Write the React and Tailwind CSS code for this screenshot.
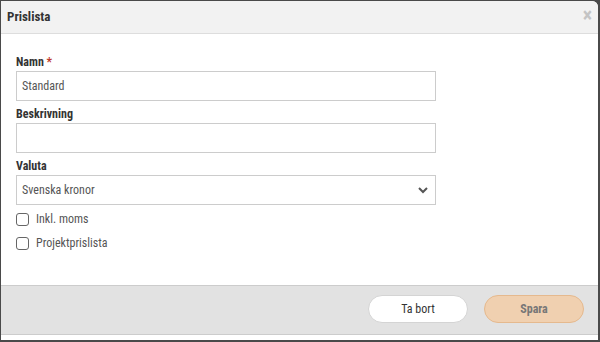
import React from "react";

const font = { fontFamily: '"Roboto Condensed", "Liberation Sans Narrow", Roboto, sans-serif' };

export default function App() {
  return (
    <div className="h-screen w-full bg-[#4a4a4a] pt-[1px] pl-[1px] pr-[2px] pb-[2px]" style={font}>
      <div className="h-full flex flex-col bg-white rounded-tr-[6px] overflow-hidden">
        {/* Header */}
        <div className="h-[33px] shrink-0 bg-[#f2f2f2] border-b border-[#dddddd] flex items-center justify-between pl-[6px] pr-[6px]">
          <h1 className="text-[13px] font-bold text-[#333]">Prislista</h1>
          <span className="text-[20px] font-bold text-[#c4c4c4] leading-none -mt-[4px]">×</span>
        </div>

        {/* Body */}
        <form className="flex-1 pt-[20px] pl-[15px] pr-[162px]">
          <label className="block h-[17px] text-[12px] font-bold text-[#333] leading-[17px]">
            Namn <span className="text-[#c0392b]">*</span>
          </label>
          <input
            type="text"
            defaultValue="Standard"
            className="w-full h-[30px] border border-[#cccccc] px-[5px] text-[12px] text-[#555] outline-none"
          />

          <label className="block mt-[5px] h-[17px] text-[12px] font-bold text-[#333] leading-[17px]">
            Beskrivning
          </label>
          <input
            type="text"
            className="w-full h-[30px] border border-[#cccccc] px-[5px] text-[12px] text-[#555] outline-none"
          />

          <label className="block mt-[5px] h-[17px] text-[12px] font-bold text-[#333] leading-[17px]">
            Valuta
          </label>
          <div className="w-full h-[30px] border border-[#cccccc] px-[5px] flex items-center justify-between">
            <span className="text-[12px] text-[#555]">Svenska kronor</span>
            <svg width="10" height="7" viewBox="0 0 10 7" className="mr-[2px]">
              <polyline points="1,1 5,5 9,1" fill="none" stroke="#555" strokeWidth="2" />
            </svg>
          </div>

          <div className="mt-[4px] flex flex-col gap-[4px]">
            <div className="h-[20px] flex items-center gap-[7px]">
              <span className="w-[13px] h-[13px] border border-[#666] rounded-[3px] bg-white" />
              <span className="text-[12px] text-[#555]">Inkl. moms</span>
            </div>
            <div className="h-[20px] flex items-center gap-[7px]">
              <span className="w-[13px] h-[13px] border border-[#666] rounded-[3px] bg-white" />
              <span className="text-[12px] text-[#555]">Projektprislista</span>
            </div>
          </div>
        </form>

        {/* Footer */}
        <div className="h-[50px] shrink-0 bg-[#e2e2e2] border-y border-[#cccccc] flex items-start justify-end gap-[16px] pt-[9px] pr-[14px]">
          <button className="w-[100px] h-[28px] rounded-full bg-white border border-[#d4d4d4] text-[12px] text-[#333]">
            Ta bort
          </button>
          <button className="w-[100px] h-[28px] rounded-full bg-[#f0d0b0] border border-[#e5b98e] text-[12px] font-bold text-[#777]">
            Spara
          </button>
        </div>
        <div className="h-[5px] shrink-0 bg-white" />
      </div>
    </div>
  );
}
